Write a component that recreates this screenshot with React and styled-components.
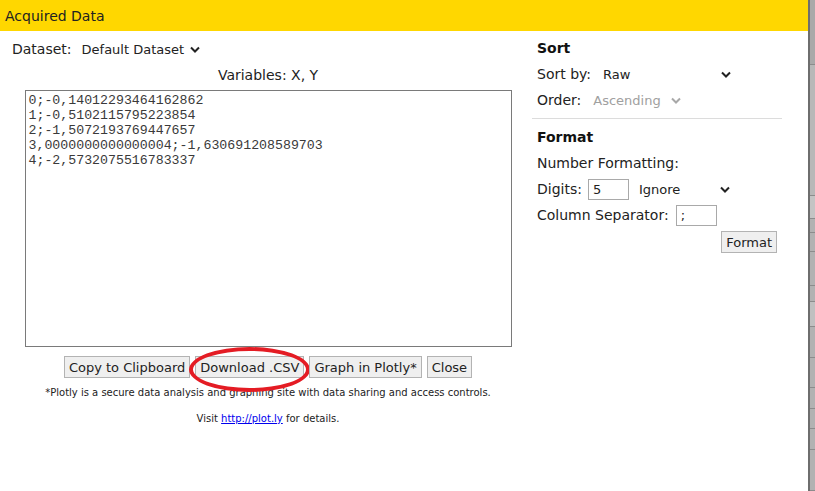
import React from "react";
import styled, { createGlobalStyle } from "styled-components";

const GlobalStyle = createGlobalStyle`
  html, body {
    margin: 0;
    padding: 0;
    background: #fff;
  }
  body {
    font-family: "DejaVu Sans", Verdana, sans-serif;
    color: #222;
  }
`;

const Page = styled.div`
  display: flex;
  width: 815px;
  height: 491px;
  overflow: hidden;
`;

const Dialog = styled.div`
  width: 808px;
  display: flex;
  flex-direction: column;
  background: #fff;
`;

const TitleBar = styled.div`
  height: 31px;
  background: #ffd700;
  display: flex;
  align-items: center;
  padding-left: 5px;
  font-size: 14px;
  color: #222;
`;

const Body = styled.div`
  display: flex;
`;

const LeftPane = styled.div`
  width: 528px;
  padding-left: 4px;
  display: flex;
  flex-direction: column;
  align-items: center;
`;

const DatasetRow = styled.div`
  align-self: stretch;
  display: flex;
  align-items: center;
  margin-top: 5px;
  padding-left: 8px;
  height: 26px;
  font-size: 14px;
`;

const Variables = styled.div`
  height: 26px;
  line-height: 26px;
  font-size: 14px;
`;

const DataArea = styled.textarea`
  box-sizing: border-box;
  width: 487px;
  height: 257px;
  margin: 2px 0 0;
  padding: 2px 3px;
  border: 1px solid #7a7a7a;
  font-family: "Liberation Mono", "Courier New", monospace;
  font-size: 13.25px;
  line-height: 15px;
  color: #3a3a3a;
  resize: none;
  outline: none;
  overflow: hidden;
`;

const ButtonRow = styled.div`
  display: flex;
  gap: 5px;
  margin-top: 9px;
`;

const Button = styled.button`
  position: relative;
  height: 22px;
  padding: 0 4px;
  background: #efefef;
  border: 1px solid #b3b3b3;
  border-radius: 0;
  font-family: "DejaVu Sans", Verdana, sans-serif;
  font-size: 13px;
  color: #222;
  align-self: ${(p) => (p.$right ? "flex-end" : "auto")};
  margin: ${(p) => (p.$right ? "3px 5px 0 0" : "0")};
`;

const Annotation = styled.span`
  position: absolute;
  left: -7px;
  top: -10px;
  width: 121px;
  height: 45px;
  box-sizing: border-box;
  border: 4px solid #e41c24;
  border-radius: 50%;
  pointer-events: none;
`;

const Note = styled.div`
  font-size: 10px;
  line-height: 14px;
  margin-top: ${(p) => p.$top}px;
  color: #222;
`;

const Link = styled.a`
  color: #0000ee;
  text-decoration: underline;
`;

const RightPane = styled.div`
  width: 250px;
  display: flex;
  flex-direction: column;
  margin-top: 4px;
`;

const Section = styled.div`
  display: flex;
  flex-direction: column;
  padding-left: 5px;
`;

const SectionTitle = styled.div`
  height: 26px;
  line-height: 26px;
  font-size: 14px;
  font-weight: bold;
  color: #111;
`;

const Row = styled.div`
  height: 26px;
  display: flex;
  align-items: center;
  font-size: 14px;
`;

const Divider = styled.div`
  border-top: 1px solid #dcdcdc;
  margin: 5px 0 5px;
`;

const SelectBox = styled.div`
  box-sizing: border-box;
  display: inline-flex;
  align-items: center;
  justify-content: space-between;
  width: ${(p) => p.$width}px;
  margin-left: ${(p) => p.$gap}px;
  padding: 0 4px;
  font-size: 13px;
  color: ${(p) => (p.$disabled ? "#a0a0a0" : "#222")};
`;

const Input = styled.input`
  box-sizing: border-box;
  width: 41px;
  height: 21px;
  margin: 0 0 0 ${(p) => p.$gap}px;
  padding: 0 4px;
  border: 1px solid #a9a9a9;
  font-family: "DejaVu Sans", Verdana, sans-serif;
  font-size: 13px;
  color: #222;
  outline: none;
`;

const Backdrop = styled.div`
  flex: 1;
  border-left: 2px solid #6e6e6e;
  background: #b2b2b2;
  display: flex;
  flex-direction: column;
`;

const Stripe = styled.div`
  height: ${(p) => p.$h}px;
  background: ${(p) => p.$bg || "transparent"};
  border-bottom: 1px solid #8c8c8c;
`;

function Chevron({ color = "#222" }) {
  return (
    <svg width="10" height="7" viewBox="0 0 10 7">
      <polyline points="1,1.5 5,5.5 9,1.5" fill="none" stroke={color} strokeWidth="2" />
    </svg>
  );
}

function Select({ value, width, gap, disabled }) {
  return (
    <SelectBox $width={width} $gap={gap} $disabled={disabled}>
      <span>{value}</span>
      <Chevron color={disabled ? "#a8a8a8" : "#222"} />
    </SelectBox>
  );
}

const data = [
  "0;-0,14012293464162862",
  "1;-0,5102115795223854",
  "2;-1,5072193769447657",
  "3,0000000000000004;-1,630691208589703",
  "4;-2,5732075516783337",
].join("\n");

const stripes = [
  { h: 64, bg: "#a9a9a9" },
  { h: 130, bg: "#b8b8b8" },
  { h: 22, bg: "#c4c4c4" },
  { h: 13 },
  { h: 19 },
  { h: 33 },
  { h: 15 },
  { h: 24, bg: "#c0c0c0" },
  { h: 30 },
  { h: 29 },
  { h: 20 },
  { h: 19 },
  { h: 20 },
  { h: 40 },
];

export default function App() {
  return (
    <Page>
      <GlobalStyle />
      <Dialog>
        <TitleBar>Acquired Data</TitleBar>
        <Body>
          <LeftPane>
            <DatasetRow>
              Dataset:
              <Select value="Default Dataset" width={126} gap={6} />
            </DatasetRow>
            <Variables>Variables: X, Y</Variables>
            <DataArea readOnly value={data} />
            <ButtonRow>
              <Button>Copy to Clipboard</Button>
              <Button>
                Download .CSV
                <Annotation />
              </Button>
              <Button>Graph in Plotly*</Button>
              <Button>Close</Button>
            </ButtonRow>
            <Note $top={8}>
              *Plotly is a secure data analysis and graphing site with data sharing and access controls.
            </Note>
            <Note $top={12}>
              Visit <Link href="#">http://plot.ly</Link> for details.
            </Note>
          </LeftPane>
          <RightPane>
            <Section>
              <SectionTitle>Sort</SectionTitle>
              <Row>
                Sort by:
                <Select value="Raw" width={136} gap={8} />
              </Row>
              <Row>
                Order:
                <Select value="Ascending" width={96} gap={8} disabled />
              </Row>
            </Section>
            <Divider />
            <Section>
              <SectionTitle>Format</SectionTitle>
              <Row>Number Formatting:</Row>
              <Row>
                Digits:
                <Input $gap={6} defaultValue="5" />
                <Select value="Ignore" width={99} gap={6} />
              </Row>
              <Row>
                Column Separator:
                <Input $gap={7} defaultValue=";" />
              </Row>
              <Button $right>Format</Button>
            </Section>
          </RightPane>
        </Body>
      </Dialog>
      <Backdrop>
        {stripes.map((s, i) => (
          <Stripe key={i} $h={s.h} $bg={s.bg} />
        ))}
      </Backdrop>
    </Page>
  );
}
